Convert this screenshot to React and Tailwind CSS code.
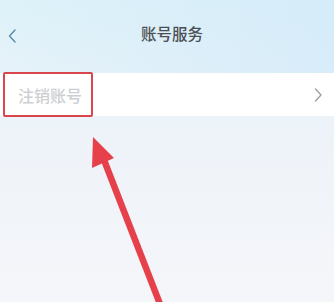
import React from 'react';

const Arrow = () => (
    <svg className="absolute left-0 top-0 pointer-events-none" width="334" height="302" viewBox="0 0 334 302">
        <line x1="104" y1="160" x2="160" y2="304" stroke="#e6404a" strokeWidth="6.5" strokeLinecap="butt" />
        <polygon points="93,137 92,168 114,158" fill="#e6404a" />
    </svg>
);

export default function App() {
    return (
        <div
            className="relative w-[334px] h-[302px] overflow-hidden bg-gradient-to-b from-[#ddf2f9] via-[#eef3f9] via-45% to-[#f5f6fa]"
            style={{ fontFamily: '"Noto Sans CJK SC", "Noto Sans", sans-serif' }}
        >
            <div className="absolute inset-x-0 top-0 bg-gradient-to-l from-[#d2e9f9]/70 to-transparent h-[80px]" />
            <div className="relative flex flex-col">
                <div className="relative h-[68px] flex items-center justify-center">
                    <svg className="absolute left-[8px] top-[29px]" width="8" height="14" viewBox="0 0 8 14">
                        <path d="M7 1 L1.5 7 L7 13" fill="none" stroke="#5a8aa8" strokeWidth="1.4" strokeLinecap="round" strokeLinejoin="round" />
                    </svg>
                    <span className="ml-[10px] text-[15.5px] font-medium text-[#4b4e53]">账号服务</span>
                </div>
                <div className="mt-[5px] h-[43px] bg-white flex items-center justify-between pl-[18px] pr-[12px]">
                    <span className="text-[16px] font-medium text-[#cdcfd2]">注销账号</span>
                    <svg width="8" height="14" viewBox="0 0 8 14">
                        <path d="M1.5 1 L7 7 L1.5 13" fill="none" stroke="#9a9da2" strokeWidth="1.3" strokeLinecap="round" strokeLinejoin="round" />
                    </svg>
                </div>
                <div className="absolute left-[3px] top-[72px] w-[90px] h-[45px] border-[2.5px] border-[#d9464e] rounded-[2px]" />
            </div>
            <Arrow />
        </div>
    );
}
